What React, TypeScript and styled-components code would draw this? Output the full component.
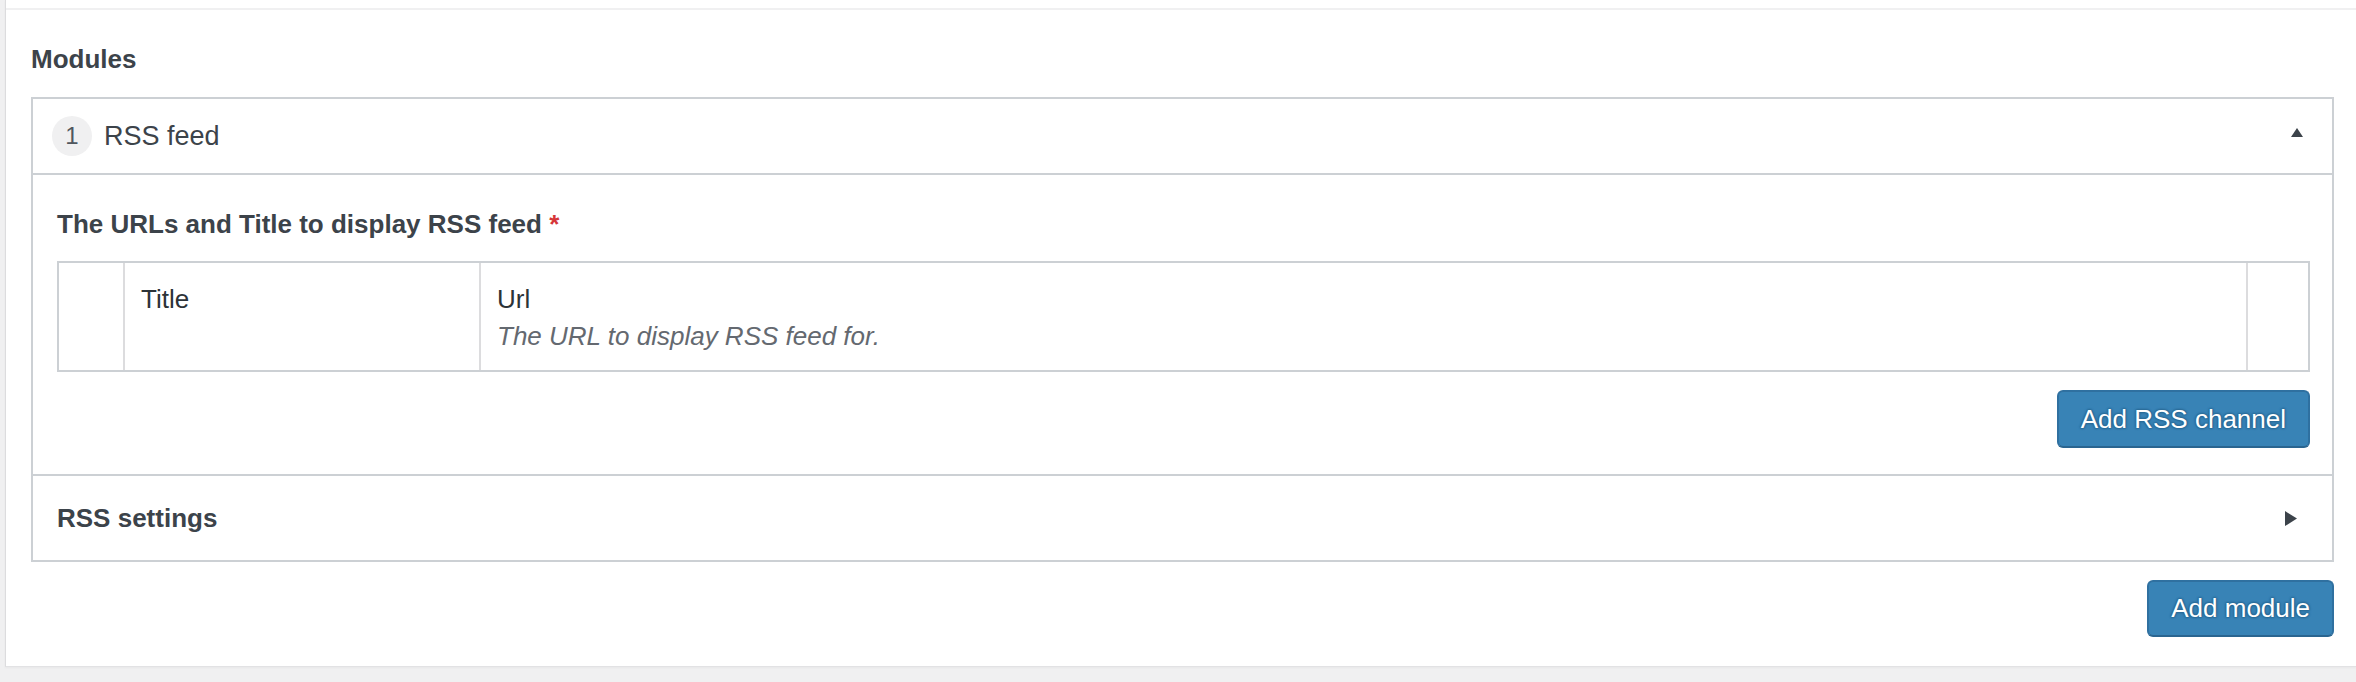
import React from 'react';
import styled, { createGlobalStyle } from 'styled-components';

const GlobalStyle = createGlobalStyle`
  body {
    margin: 0;
    background: #f0f0f1;
    font-family: "Liberation Sans", Arial, sans-serif;
    color: #3c434a;
  }
`;

const Page = styled.div`
  padding-left: 5px;
  padding-bottom: 15px;
`;

const Panel = styled.div`
  background: #fff;
  border-left: 1px solid #dcdcde;
  border-bottom: 1px solid #e2e2e4;
  box-shadow: 0 1px 2px rgba(0, 0, 0, 0.04);
`;

const TopStrip = styled.div`
  height: 8px;
  border-bottom: 2px solid #f0f0f1;
`;

const Body = styled.div`
  padding: 31px 22px 29px 25px;
`;

const Heading = styled.h2`
  margin: 0 0 20px;
  font-size: 26px;
  line-height: 36px;
  font-weight: 700;
  color: #3c434a;
`;

const Accordion = styled.div`
  border: 2px solid #ccd0d4;
`;

const ModuleHeader = styled.div`
  display: flex;
  align-items: center;
  height: 74px;
  padding: 0 29px 0 19px;
  border-bottom: 2px solid #ccd0d4;
`;

const Badge = styled.span`
  display: flex;
  align-items: center;
  justify-content: center;
  width: 40px;
  height: 40px;
  border-radius: 50%;
  background: #f0f0f1;
  color: #50575e;
  font-size: 24px;
  margin-right: 12px;
`;

const ModuleTitle = styled.span`
  flex: 1;
  font-size: 27px;
  color: #3c434a;
`;

const Toggle = styled.span<{ $lift?: number }>`
  display: flex;
  margin-top: ${p => -(p.$lift ?? 0) * 2}px;
`;

const Content = styled.div`
  padding: 31px 22px 26px 24px;
`;

const FieldLabel = styled.div`
  font-size: 26px;
  line-height: 36px;
  font-weight: 700;
  margin-bottom: 19px;
`;

const Required = styled.span`
  color: #d63638;
`;

const Table = styled.div`
  display: grid;
  grid-template-columns: 64px 356px 1fr 62px;
  border: 2px solid #ccd0d4;
`;

const Cell = styled.div<{ $first?: boolean }>`
  padding: 18px 16px 15px;
  border-left: ${p => (p.$first ? 'none' : '2px solid #dcdcde')};
  font-size: 26px;
  line-height: 37px;
  color: #2c3338;
`;

const Hint = styled.div`
  font-style: italic;
  color: #646970;
`;

const Actions = styled.div<{ $gap: number }>`
  display: flex;
  justify-content: flex-end;
  margin-top: ${p => p.$gap}px;
`;

const Button = styled.button<{ $height: number }>`
  height: ${p => p.$height}px;
  padding: 0 22px;
  border: 2px solid #2f70a0;
  border-bottom-color: #2a6590;
  border-radius: 6px;
  background: #3883b6;
  color: #fff;
  font-family: "Liberation Sans", Arial, sans-serif;
  font-size: 26px;
  text-shadow: 0 -1px 2px #2a6a96, 1px 0 2px #2a6a96, 0 1px 2px #2a6a96,
    -1px 0 2px #2a6a96;
  cursor: pointer;
`;

const SettingsRow = styled.div`
  display: flex;
  align-items: center;
  height: 84px;
  padding: 0 35px 0 24px;
  border-top: 2px solid #ccd0d4;
`;

const SettingsTitle = styled.span`
  flex: 1;
  font-size: 26px;
  font-weight: 700;
`;

const CaretUp = () => (
  <svg width="12" height="9" viewBox="0 0 12 9">
    <path d="M6 0 L12 9 L0 9 Z" fill="#3c434a" />
  </svg>
);

const CaretRight = () => (
  <svg width="12" height="15" viewBox="0 0 12 15">
    <path d="M0 0 L12 7.5 L0 15 Z" fill="#3c434a" />
  </svg>
);

const App: React.FC = function() {
  return (
    <Page>
      <GlobalStyle />
      <Panel>
        <TopStrip />
        <Body>
          <Heading>Modules</Heading>
          <Accordion>
            <ModuleHeader>
              <Badge>1</Badge>
              <ModuleTitle>RSS feed</ModuleTitle>
              <Toggle $lift={3.5}>
                <CaretUp />
              </Toggle>
            </ModuleHeader>
            <Content>
              <FieldLabel>
                The URLs and Title to display RSS feed <Required>*</Required>
              </FieldLabel>
              <Table>
                <Cell $first />
                <Cell>Title</Cell>
                <Cell>
                  <div>Url</div>
                  <Hint>The URL to display RSS feed for.</Hint>
                </Cell>
                <Cell />
              </Table>
              <Actions $gap={18}>
                <Button $height={58}>Add RSS channel</Button>
              </Actions>
            </Content>
            <SettingsRow>
              <SettingsTitle>RSS settings</SettingsTitle>
              <Toggle>
                <CaretRight />
              </Toggle>
            </SettingsRow>
          </Accordion>
          <Actions $gap={18}>
            <Button $height={57}>Add module</Button>
          </Actions>
        </Body>
      </Panel>
    </Page>
  );
};

export default App;
